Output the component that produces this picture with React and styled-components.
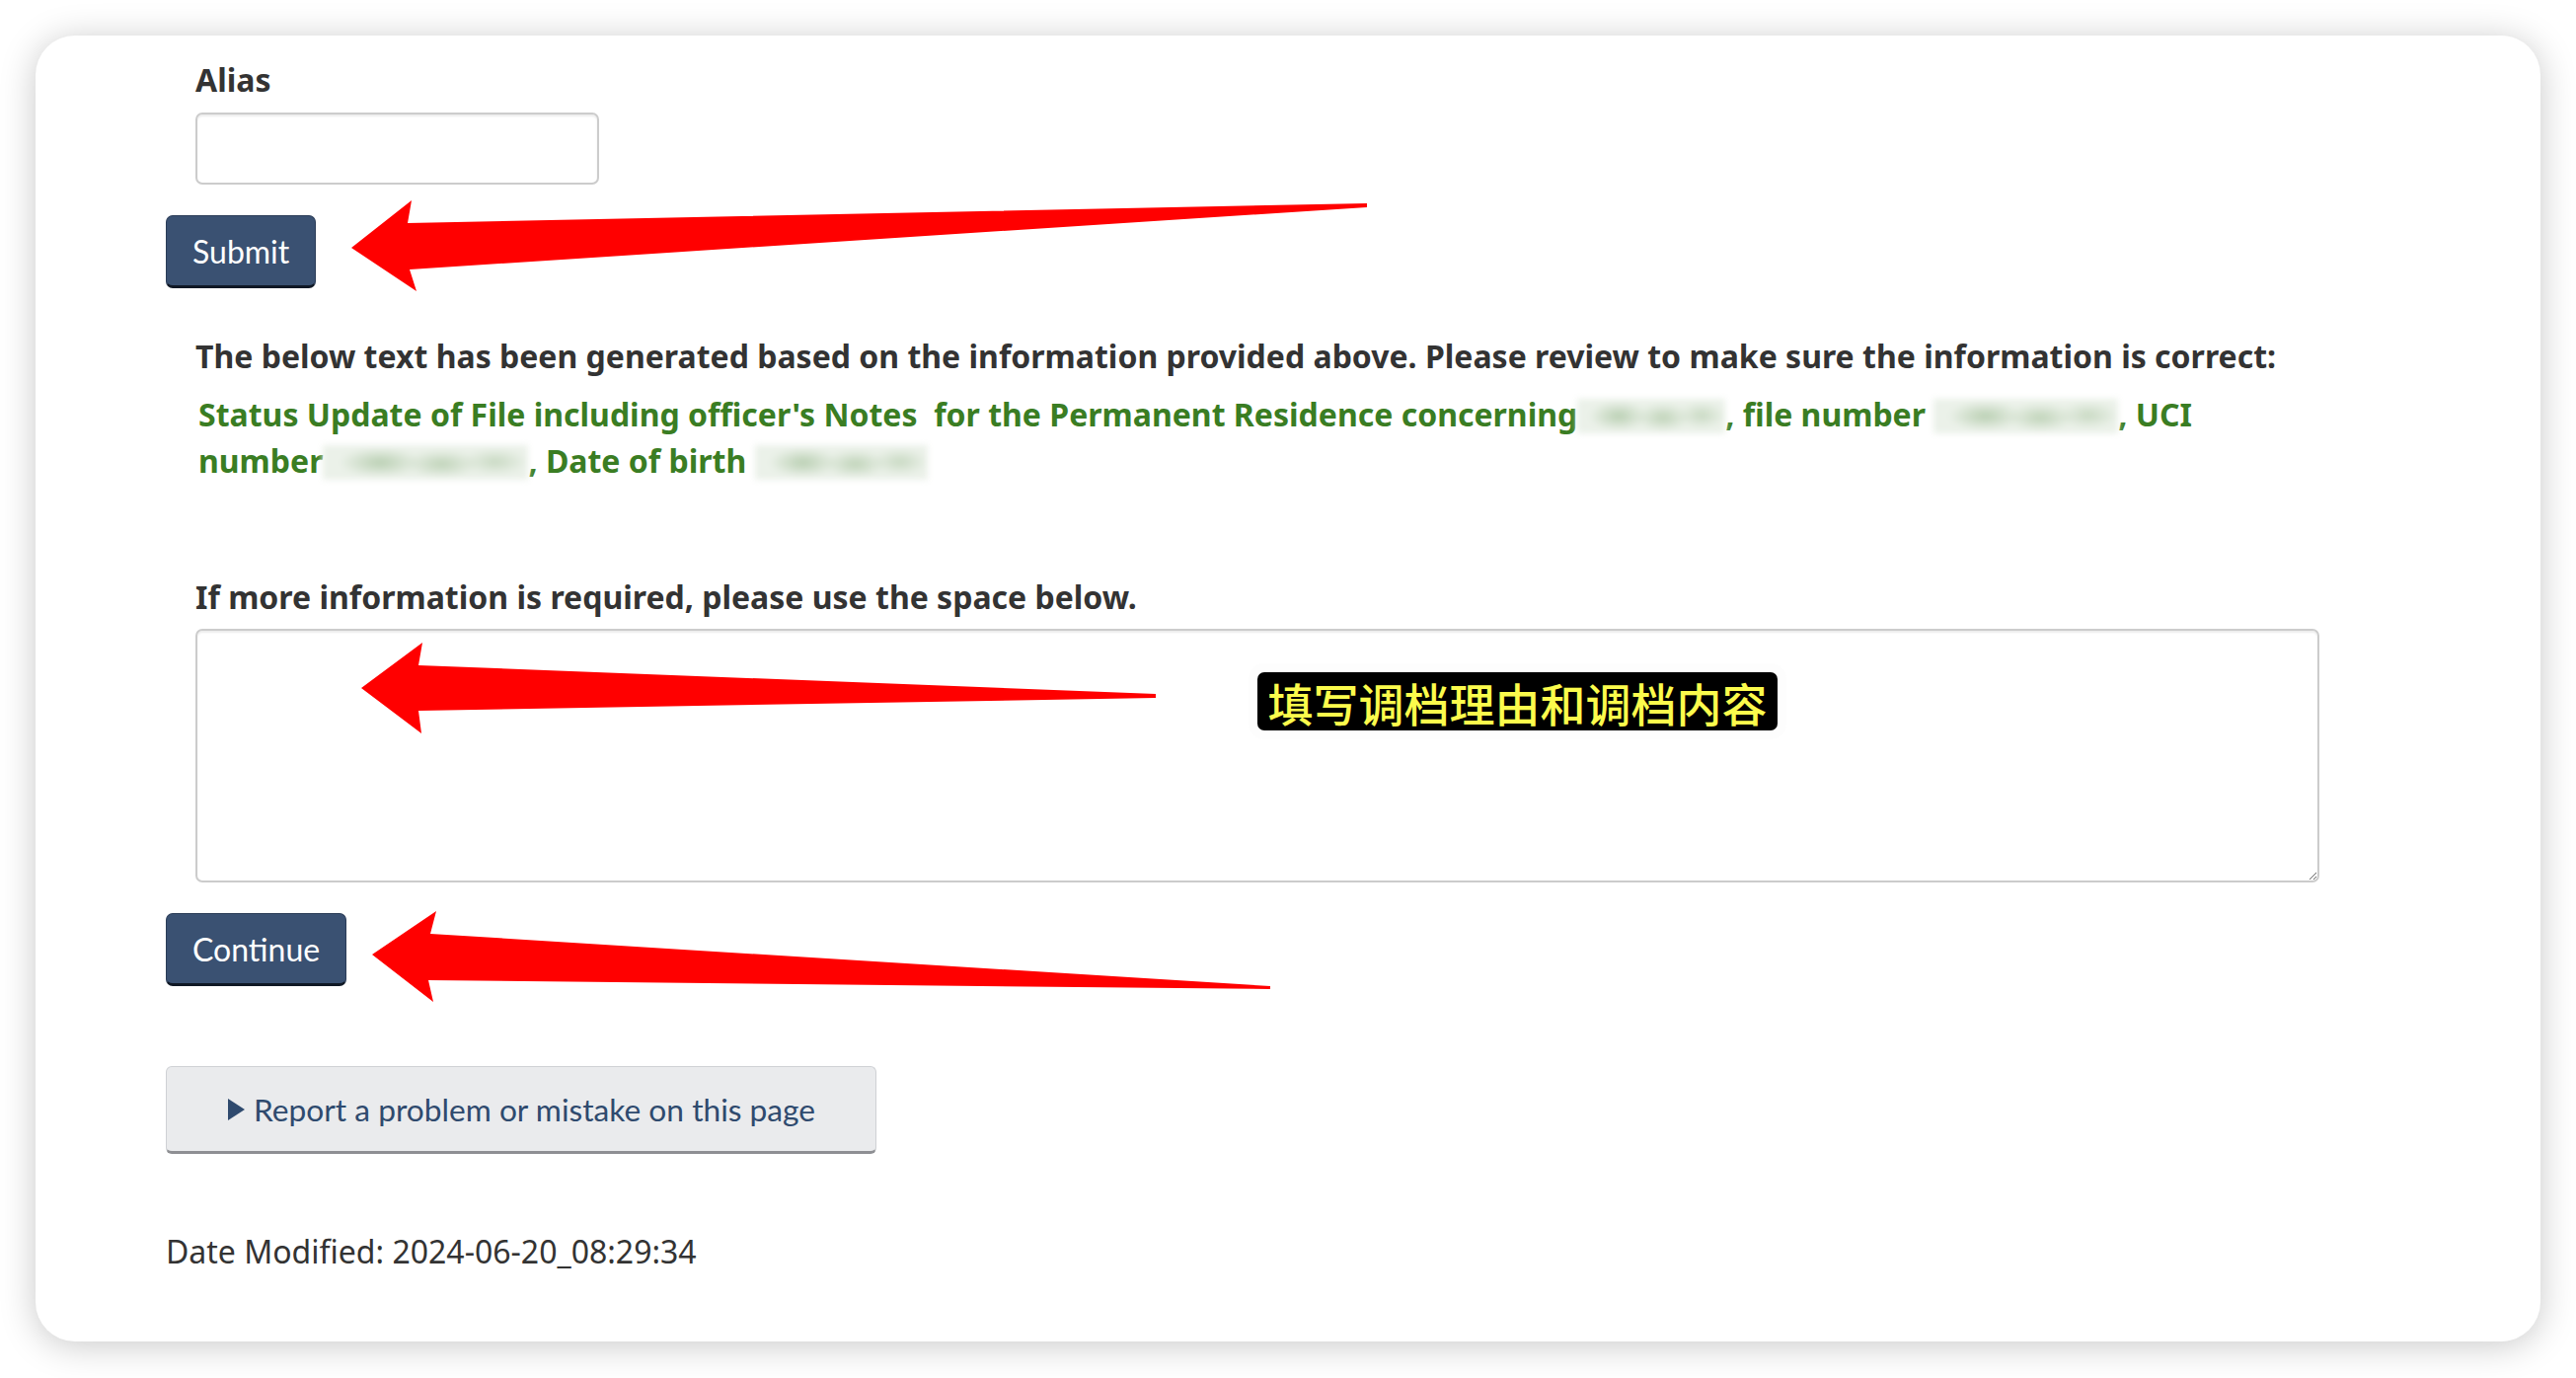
import React from "react";
import styled, { createGlobalStyle } from "styled-components";

const GlobalStyle = createGlobalStyle`
  html, body {
    margin: 0;
    padding: 0;
    background: #fff;
  }
  body {
    font-family: "Noto Sans", "Liberation Sans", sans-serif;
    color: #333;
  }
`;

export default function App() {
  return (
    <Page>
      <GlobalStyle />
      <Card>
        <Indented>
          <Label htmlFor="alias">Alias</Label>
          <TextInput id="alias" type="text" />
        </Indented>
        <PrimaryButton top={31}>Submit</PrimaryButton>

        <Indented>
          <Intro>
            The below text has been generated based on the information provided
            above. Please review to make sure the information is correct:
          </Intro>
          <Generated>
            Status Update of File including officer's Notes&nbsp; for the
            Permanent Residence concerning<Redacted w={150} />, file number{" "}
            <Redacted w={187} />, UCI
            <br />
            number<Redacted w={208} />, Date of birth <Redacted w={175} />
          </Generated>
          <Intro top={91}>
            If more information is required, please use the space below.
          </Intro>
          <Notes />
        </Indented>
        <PrimaryButton top={31}>Continue</PrimaryButton>

        <ReportButton>
          <Caret />
          Report a problem or mistake on this page
        </ReportButton>

        <Modified>Date Modified: 2024-06-20_08:29:34</Modified>
      </Card>

      <Callout>填写调档理由和调档内容</Callout>
      <Arrows viewBox="0 0 2610 1396">
        <polygon points="356,251 417,203 413,226 1385,206 1385,210 415,273 422,295" />
        <polygon points="366,697 428,651 424,674 1171,703 1171,707 424,720 427,743" />
        <polygon points="377,967 442,923 436,946 1287,999 1287,1002 434,993 439,1015" />
      </Arrows>
    </Page>
  );
}

const Page = styled.div`
  position: relative;
  width: 2610px;
  height: 1396px;
  padding: 36px;
  box-sizing: border-box;
`;

const Card = styled.div`
  box-sizing: border-box;
  height: 1323px;
  padding: 23px 0 0 132px;
  background: #fff;
  border-radius: 40px;
  box-shadow: 0 4px 36px rgba(0, 0, 0, 0.22);
  display: flex;
  flex-direction: column;
  align-items: flex-start;
`;

const Indented = styled.div`
  display: flex;
  flex-direction: column;
  align-items: flex-start;
  margin-left: 30px;
`;

const Label = styled.label`
  font-size: 32px;
  font-weight: 700;
  line-height: 44px;
  color: #333;
`;

const TextInput = styled.input`
  box-sizing: border-box;
  margin-top: 11px;
  width: 409px;
  height: 73px;
  border: 2px solid #ccc;
  border-radius: 7px;
  box-shadow: inset 0 2px 2px rgba(0, 0, 0, 0.075);
  font-size: 32px;
  padding: 0 18px;
  outline: none;
`;

const PrimaryButton = styled.button`
  box-sizing: border-box;
  margin-top: ${(p) => p.top}px;
  height: 74px;
  padding: 2px 26px 0;
  background: #3a5172;
  color: #fff;
  border: 1px solid #2a3c57;
  border-bottom: 3px solid #0f1825;
  border-radius: 7px;
  font-family: Lato, "Noto Sans", sans-serif;
  font-size: 32px;
  line-height: 1;
  cursor: pointer;
`;

const Intro = styled.p`
  margin: ${(p) => p.top || 45}px 0 0;
  font-size: 32px;
  font-weight: 700;
  line-height: 47px;
  color: #333;
`;

const Generated = styled.p`
  margin: 12px 0 0;
  padding-left: 3px;
  font-size: 32px;
  font-weight: 700;
  line-height: 47px;
  color: #3a7d23;
`;

const Redacted = styled.span`
  display: inline-block;
  width: ${(p) => p.w}px;
  height: 35px;
  vertical-align: -7px;
  background:
    radial-gradient(ellipse 20% 42% at 28% 50%, #b9cfb2 0, transparent 100%),
    radial-gradient(ellipse 18% 40% at 58% 54%, #bfd3b8 0, transparent 100%),
    radial-gradient(ellipse 16% 38% at 84% 48%, #c8d9c2 0, transparent 100%),
    #ebf1e9;
  filter: blur(3px);
`;

const Notes = styled.textarea`
  box-sizing: border-box;
  margin-top: 9px;
  width: 2152px;
  height: 257px;
  border: 2px solid #ccc;
  border-radius: 7px;
  box-shadow: inset 0 2px 2px rgba(0, 0, 0, 0.075);
  font-size: 32px;
  outline: none;
  resize: vertical;
`;

const ReportButton = styled.button`
  box-sizing: border-box;
  margin-top: 81px;
  width: 720px;
  height: 89px;
  display: flex;
  align-items: center;
  padding: 0 0 0 62px;
  background: #eaebed;
  border: 1px solid #cfd1d5;
  border-bottom: 3px solid #8e8f93;
  border-radius: 6px;
  color: #2f4a6e;
  font-family: Lato, "Noto Sans", sans-serif;
  font-size: 31.7px;
  cursor: pointer;
`;

const Caret = styled.span`
  width: 0;
  height: 0;
  margin-right: 9px;
  border-top: 11px solid transparent;
  border-bottom: 11px solid transparent;
  border-left: 17px solid #2f4a6e;
`;

const Modified = styled.p`
  margin: 75px 0 0;
  font-size: 32px;
  line-height: 47px;
  color: #333;
`;

const Callout = styled.div`
  position: absolute;
  left: 1274px;
  top: 681px;
  width: 527px;
  height: 59px;
  display: flex;
  align-items: center;
  justify-content: center;
  background: #000;
  border-radius: 7px;
  box-shadow: 0 0 0 9px rgba(248, 248, 248, 0.35);
  color: #fbfb4c;
  font-family: "Noto Sans CJK SC", sans-serif;
  font-size: 46px;
  font-weight: 500;
  line-height: 1;
  white-space: nowrap;
`;

const Arrows = styled.svg`
  position: absolute;
  left: 0;
  top: 0;
  width: 2610px;
  height: 1396px;
  pointer-events: none;
  fill: #ff0000;
`;
